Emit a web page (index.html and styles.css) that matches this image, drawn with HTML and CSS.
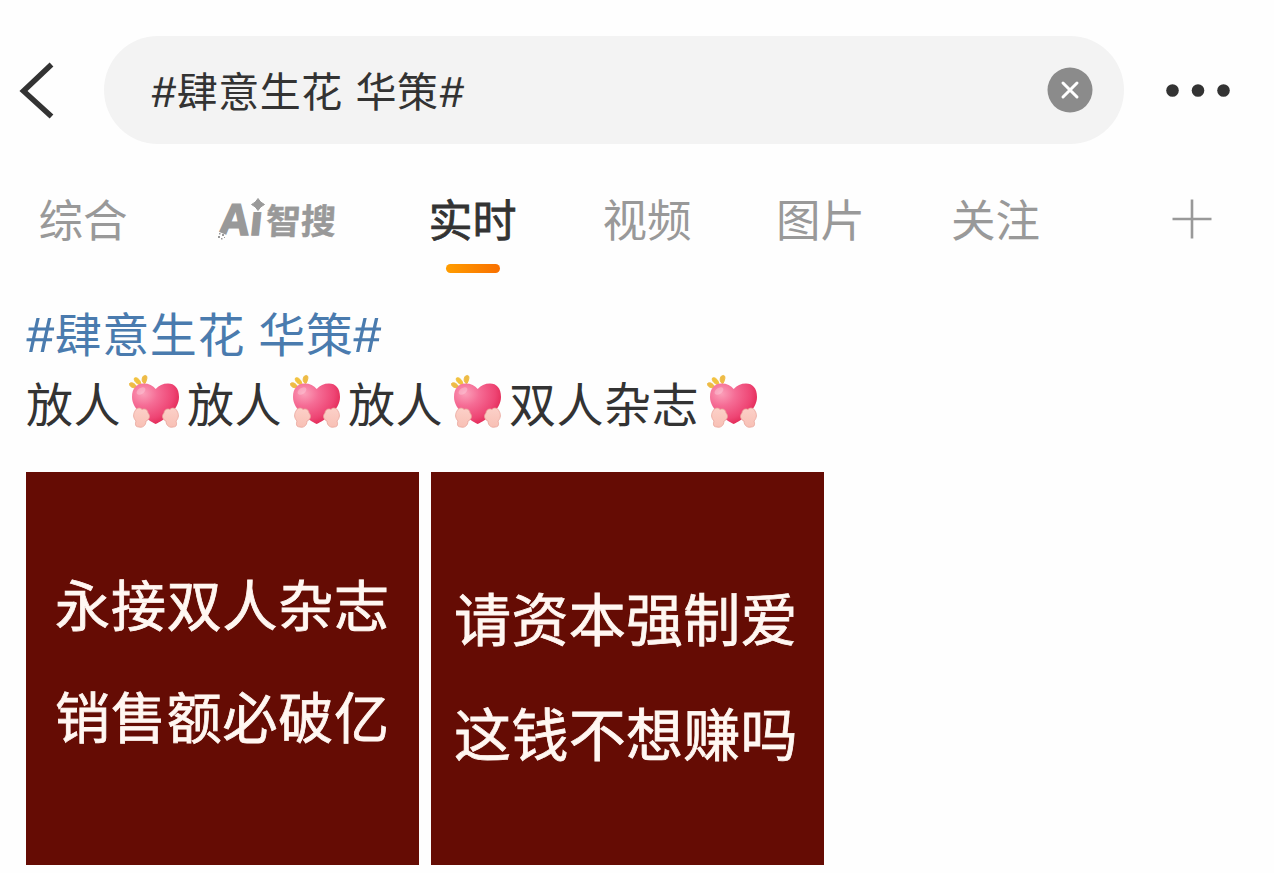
FILE: index.html
```
<!DOCTYPE html>
<html lang="zh-CN">
<head>
<meta charset="utf-8">
<title>#肆意生花 华策#</title>
<link rel="stylesheet" href="styles.css">
</head>
<body>
<svg class="defs" width="0" height="0" aria-hidden="true">
  <defs>
    <radialGradient id="heartFill" cx="0.24" cy="0.25" r="0.85">
      <stop offset="0" stop-color="#fb9fb9"/>
      <stop offset="0.35" stop-color="#f56c95"/>
      <stop offset="0.75" stop-color="#ee4574"/>
      <stop offset="1" stop-color="#e02450"/>
    </radialGradient>
    <linearGradient id="handFill" x1="0" y1="0" x2="0" y2="1">
      <stop offset="0" stop-color="#fcd0c8"/>
      <stop offset="1" stop-color="#f8c0b5"/>
    </linearGradient>
    <symbol id="heart" viewBox="0 0 54 56">
      <path d="M1.500 9.500C3.500 7.500 8 10 8.500 13C5.500 15 1 12.500 1.500 9.500Z" fill="#eebb45" stroke="#eebb45"/>
      <path d="M6.500 4C9.500 2.500 13 7 13 11C10 11 5 7 6.500 4Z" fill="#f2c23f" stroke="#f2c23f"/>
      <path d="M15.500 2C19.500 0 20 4 17 9.500C13.500 9 13.500 4 15.500 2Z" fill="#eebb45" stroke="#eebb45"/>
      <path d="M27.700 50C20 46 4 36 4 23C4 14 9 9.500 15.500 9.500C21 9.500 25 11.500 27.700 15C30.500 11.500 35 9.500 40 9.500C46.500 9.500 51 14 51 23C51 36 36 46 27.700 50Z" fill="url(#heartFill)"/>
      <ellipse cx="13" cy="17" rx="5" ry="3" fill="#fff" opacity="0.25" transform="rotate(-35 13 17)"/>
      <path id="hand" d="M7 37C8 34 12 33 14 35.500C17 34 20 36 20 39C23 42 21 46 18 47C18 52 14 54 11 53C7 53 7 50 8 47C5 44 5 40 7 37Z" fill="url(#handFill)" stroke="#e8a49b" stroke-width="0.8"/>
      <use href="#hand" transform="matrix(-1 0 0 1 56 0)"/>
    </symbol>
  </defs>
</svg>

<header class="topbar">
  <svg class="back" viewBox="0 0 36 60"><path d="M33.500 4.500L5.500 31L33.500 56.500" fill="none" stroke="#333" stroke-width="5.500"/></svg>
  <div class="search">
    <span class="query"><span class="hash">#</span>肆意生花 华策<span class="hash">#</span></span>
    <svg class="clear" viewBox="0 0 46 46"><circle cx="23" cy="23" r="22.500" fill="#8b8b8b"/><path d="M16 16L30 30M30 16L16 30" stroke="#fff" stroke-width="3" stroke-linecap="round"/></svg>
  </div>
  <svg class="more" viewBox="0 0 64 14"><g fill="#333"><circle cx="6.500" cy="7.500" r="6.300"/><circle cx="32" cy="7.500" r="6.300"/><circle cx="57.500" cy="7.500" r="6.300"/></g></svg>
</header>

<nav class="tabs">
  <span class="tab">综合</span>
  <span class="tab ai"><span class="ai-mark"><span class="ai-latin">Ai</span><svg class="spark" viewBox="0 0 14 14"><path d="M0 2H14V14H0Z" fill="#fefefe"/><path d="M7 0.500Q9 4.500 13.500 6.500Q9 8.500 7 12.500Q5 8.500 0.500 6.500Q5 4.500 7 0.500Z" fill="#999" stroke="#999"/></svg><svg class="dust" viewBox="0 0 12 14"><path d="M0 4L12 9L8 14H0Z" fill="#fefefe"/><path d="M4 3h2v2h-2zM7 5h2v2h-2zM2 6h1.500v1.500h-1.500zM5 7h2v2h-2zM1 9h2v2h-2zM4 11h1.500v1.500h-1.500zM7 10h1v1h-1z" fill="#999"/></svg></span><span class="ai-cjk">智搜</span></span>
  <span class="tab active">实时</span>
  <span class="tab">视频</span>
  <span class="tab">图片</span>
  <span class="tab">关注</span>
  <svg class="plus" viewBox="0 0 40 40"><path d="M0.500 20H39.500M20 0.500V39.500" stroke="#999" stroke-width="2.600"/></svg>
</nav>

<main class="post">
  <p class="topic"><span class="hash">#</span>肆意生花 华策<span class="hash">#</span></p>
  <p class="body">放人<svg class="emoji"><use href="#heart"/></svg>放人<svg class="emoji"><use href="#heart"/></svg>放人<svg class="emoji"><use href="#heart"/></svg>双人杂志<svg class="emoji"><use href="#heart"/></svg></p>
  <div class="gallery">
    <div class="card first"><span>永接双人杂志</span><span>销售额必破亿</span></div>
    <div class="card second"><span>请资本强制爱</span><span>这钱不想赚吗</span></div>
  </div>
</main>
</body>
</html>
```
FILE: styles.css
```
* { box-sizing: border-box; }
body {
  margin: 0;
  width: 1274px;
  height: 873px;
  overflow: hidden;
  background: #fefefe;
  color: #333;
  font-family: "Noto Sans CJK SC", sans-serif;
}
p { margin: 0; }
svg { display: block; flex: none; }
.defs { position: absolute; }

.topbar {
  display: flex;
  align-items: center;
  height: 144px;
  padding: 36px 44px 0 18px;
}
.back { width: 36px; height: 60px; }
.search {
  display: flex;
  align-items: center;
  justify-content: space-between;
  width: 1020px;
  height: 108px;
  margin-left: 50px;
  padding: 0 31px 0 47px;
  border-radius: 54px;
  background: #f3f3f3;
}
.query {
  padding-bottom: 3px;
  font-size: 41px;
  line-height: 60px;
  letter-spacing: 0.5px;
  word-spacing: 3px;
  white-space: nowrap;
}
.hash {
  display: inline-block;
  width: 0.63em;
  text-align: center;
  letter-spacing: 0;
  transform: skewX(-4deg) scaleX(1.18);
}
.clear { width: 46px; height: 46px; }
.more { width: 64px; height: 14px; margin-left: 42px; }

.tabs {
  display: grid;
  grid-template-columns: 166px 224px 165px 184px 163px 187px 185px;
  height: 140px;
  align-items: start;
  padding-top: 40px;
}
.tab {
  justify-self: center;
  font-size: 44.5px;
  line-height: 68px;
  color: #999;
  white-space: nowrap;
}
.active {
  position: relative;
  font-size: 44px;
  color: #333;
  -webkit-text-stroke: 0.8px #333;
}
.active::after {
  content: "";
  position: absolute;
  left: 17px;
  top: 80px;
  width: 54px;
  height: 9px;
  border-radius: 5px;
  background: linear-gradient(90deg, #ff9d00, #f97000);
}
.ai { display: flex; align-items: center; height: 68px; }
.ai-mark { position: relative; margin-right: 3px; }
.ai-latin {
  display: block;
  font: 700 43px/68px "Open Sans", sans-serif;
  letter-spacing: 0.5px;
  -webkit-text-stroke: 1.4px #999;
  transform: translateY(1px) skewX(-6deg);
}
.ai-cjk {
  font-size: 35px;
  font-weight: 700;
  -webkit-text-stroke: 0.4px #999;
  transform: translateY(1px) skewX(-3deg);
}
.spark { position: absolute; right: -2px; top: 14px; width: 14px; height: 14px; }
.dust { position: absolute; left: -3px; bottom: 11px; width: 12px; height: 14px; }
.plus { width: 40px; height: 40px; justify-self: center; margin: 15px 0 0 21px; }

.post { padding: 13px 26px 0; }
.topic {
  height: 70px;
  font-size: 47px;
  line-height: 70px;
  letter-spacing: 0.6px;
  word-spacing: 2px;
  color: #4a7bae;
}
.topic .hash { width: 0.61em; }
.body {
  display: flex;
  align-items: center;
  height: 70px;
  font-size: 47px;
  line-height: 70px;
  letter-spacing: 0.5px;
}
.emoji { width: 54px; height: 56px; margin: 0 5px 0 7px; }

.gallery { display: flex; gap: 12px; margin-top: 35px; }
.card {
  display: flex;
  flex-direction: column;
  align-items: center;
  width: 393px;
  height: 393px;
  background: #650c04;
  color: #fff7f2;
  -webkit-text-stroke: 0.8px #fff7f2;
}
.first { padding-top: 75px; font-size: 55px; line-height: 111.5px; letter-spacing: 0.8px; }
.second { padding: 87px 3px 0 0; font-size: 57px; line-height: 114.5px; letter-spacing: 0.3px; }
```
